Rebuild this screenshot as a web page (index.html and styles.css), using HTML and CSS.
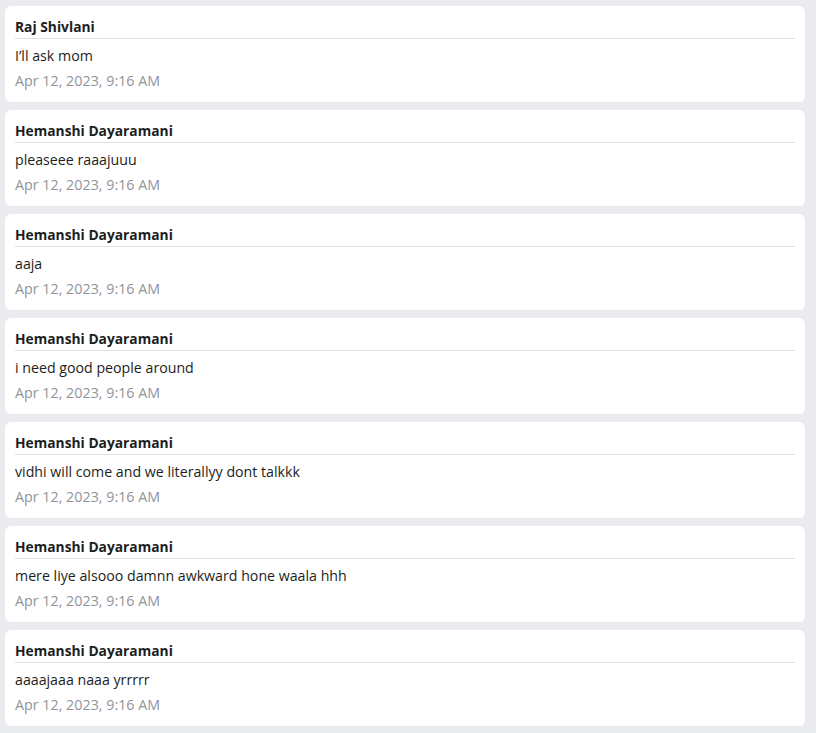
FILE: index.html
```html
<!DOCTYPE html>
<html>
<head>
<meta charset="utf-8">
<link rel="stylesheet" href="styles.css">
</head>
<body>
<div class="list">
  <div class="card"><div class="name">Raj Shivlani</div><div class="msg">I’ll ask mom</div><div class="time">Apr 12, 2023, 9:16 AM</div></div>
  <div class="card"><div class="name">Hemanshi Dayaramani</div><div class="msg">pleaseee raaajuuu</div><div class="time">Apr 12, 2023, 9:16 AM</div></div>
  <div class="card"><div class="name">Hemanshi Dayaramani</div><div class="msg">aaja</div><div class="time">Apr 12, 2023, 9:16 AM</div></div>
  <div class="card"><div class="name">Hemanshi Dayaramani</div><div class="msg">i need good people around</div><div class="time">Apr 12, 2023, 9:16 AM</div></div>
  <div class="card"><div class="name">Hemanshi Dayaramani</div><div class="msg">vidhi will come and we literallyy dont talkkk</div><div class="time">Apr 12, 2023, 9:16 AM</div></div>
  <div class="card"><div class="name">Hemanshi Dayaramani</div><div class="msg">mere liye alsooo damnn awkward hone waala hhh</div><div class="time">Apr 12, 2023, 9:16 AM</div></div>
  <div class="card"><div class="name">Hemanshi Dayaramani</div><div class="msg">aaaajaaa naaa yrrrrr</div><div class="time">Apr 12, 2023, 9:16 AM</div></div>
</div>
</body>
</html>
```
FILE: styles.css
```css
html, body {
  margin: 0;
  background: #e9ebee;
}
body {
  font-family: "Open Sans", "Noto Sans", sans-serif;
  color: #1c1e21;
}
.list {
  display: flex;
  flex-direction: column;
  gap: 8px;
  padding: 6px 11px 8px 5px;
}
.card {
  background: #fff;
  border-radius: 6px;
  padding: 10px 10px 11px 10px;
  height: 96px;
  box-sizing: border-box;
}
.name {
  font-weight: 700;
  font-size: 13.8px;
  line-height: 22px;
  height: 22px;
  border-bottom: 1px solid #dddfe2;
}
.msg {
  font-size: 14.2px;
  line-height: 20px;
  margin-top: 7px;
}
.time {
  font-size: 14.3px;
  line-height: 20px;
  margin-top: 5px;
  color: #90949c;
}
```
